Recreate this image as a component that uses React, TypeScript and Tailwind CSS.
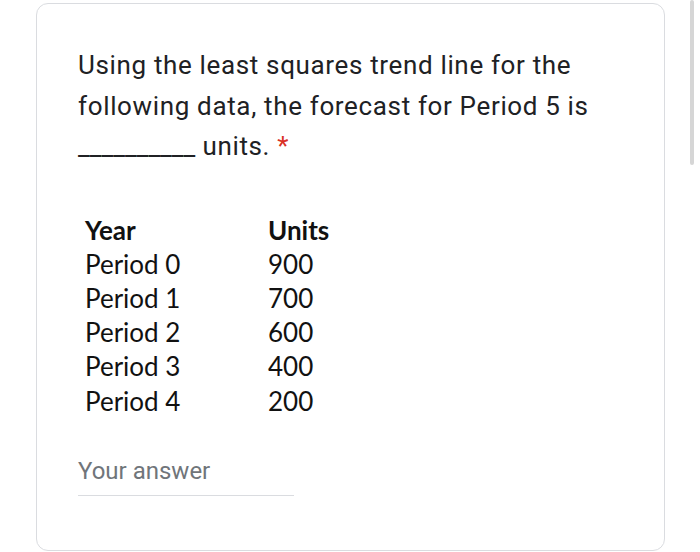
export default function App() {
  const rows = [
    ["Period 0", "900"],
    ["Period 1", "700"],
    ["Period 2", "600"],
    ["Period 3", "400"],
    ["Period 4", "200"],
  ];

  return (
    <div className="relative h-[552px] w-[700px] overflow-hidden bg-white">
      <div className="ml-[36px] mt-[3px] h-[548px] w-[629px] rounded-[12px] border border-[#dadce0] bg-white pl-[41px] pt-[41px] pr-[30px]">
        <p className="text-[26px] leading-[40.5px] tracking-[0.65px] text-[#202124] [font-family:Roboto,sans-serif]">
          Using the least squares trend line for the
          <br />
          following data, the forecast for Period 5 is
          <br />
          <span className="tracking-normal">__________</span> units.{" "}
          <span className="text-[#d93025]">*</span>
        </p>

        <div className="ml-[7px] mt-[46px] text-[26px] leading-[34.2px] text-[#111111] [font-family:Lato,sans-serif]">
          <div className="flex font-bold">
            <span className="w-[183px]">Year</span>
            <span>Units</span>
          </div>
          {rows.map(([p, u]) => (
            <div key={p} className="flex">
              <span className="w-[183px]">{p}</span>
              <span>{u}</span>
            </div>
          ))}
        </div>

        <div className="mt-[37px] w-[216px] border-b border-[#dadce0] pb-[8px]">
          <span className="text-[24px] leading-[32px] text-[#70757a] [font-family:Roboto,sans-serif]">
            Your answer
          </span>
        </div>
      </div>

      {/* scrollbar */}
      <div className="absolute left-[690px] top-0 h-[165px] w-[4px] rounded-full bg-[#d6d6d6]" />
    </div>
  );
}
